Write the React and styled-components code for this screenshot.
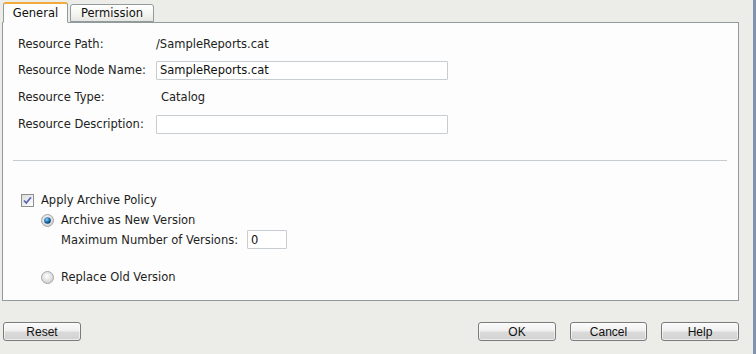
import React from "react";
import styled, { createGlobalStyle } from "styled-components";

const Global = createGlobalStyle`
  html, body { margin: 0; padding: 0; background: #ecece9; }
  body { font-family: "DejaVu Sans", sans-serif; font-size: 11px; color: #1e1e1e; }
  * { box-sizing: border-box; }
`;

const Frame = styled.div`
  width: 756px;
  height: 354px;
  background: #ecece9;
  border-right: 3px solid #8192b0;
  display: flex;
  flex-direction: column;
  font-family: "DejaVu Sans", "Liberation Sans", sans-serif;
  font-size: 11.5px;
`;

const TabStrip = styled.div`
  display: flex;
  align-items: flex-end;
  height: 23px;
  padding-left: 3px;
  gap: 2px;
  margin-bottom: -1px;
  position: relative;
  z-index: 1;
`;

const Tab = styled.div`
  height: ${(p) => (p.$active ? "21px" : "18px")};
  width: ${(p) => p.$w}px;
  display: flex;
  align-items: center;
  justify-content: center;
  border: 1px solid #919b9c;
  border-bottom: ${(p) => (p.$active ? "1px solid #fcfdfc" : "1px solid #919b9c")};
  border-top: ${(p) => (p.$active ? "2px solid #f3a93b" : "1px solid #919b9c")};
  border-radius: 3px 3px 0 0;
  background: ${(p) =>
    p.$active ? "#fcfdfc" : "linear-gradient(#ffffff, #f3f3f0 60%, #e6e6e2)"};
  color: #111;
  margin-bottom: ${(p) => (p.$active ? "0" : "1px")};
`;

const Panel = styled.div`
  margin: 0 14px 0 2px;
  height: 279px;
  border: 1px solid #919b9c;
  background: #fcfdfc;
  display: flex;
  flex-direction: column;
`;

const FormGrid = styled.div`
  display: grid;
  grid-template-columns: 138px 292px;
  grid-template-rows: 26px 26px 28px 26px;
  align-items: center;
  padding: 8px 0 0 15px;
`;

const Label = styled.div`
  color: #222;
  white-space: nowrap;
`;

const Value = styled.div`
  color: #222;
  padding-left: ${(p) => p.$indent || 0}px;
`;

const TextBox = styled.div`
  height: 19px;
  width: ${(p) => p.$w || 292}px;
  border: 1px solid #c8cdd1;
  border-radius: 1px;
  background: #fff;
  display: flex;
  align-items: center;
  padding-left: 3px;
  color: #111;
`;

const Separator = styled.div`
  margin: 23px 11px 0 10px;
  border-top: 1px solid #c6cbcf;
`;

const Policy = styled.div`
  display: flex;
  flex-direction: column;
  padding: 32px 0 0 18px;
`;

const CheckRow = styled.div`
  display: flex;
  align-items: center;
  gap: 7px;
  height: 14px;
  margin-left: ${(p) => p.$indent || 0}px;
  margin-top: ${(p) => p.$mt || 0}px;
`;

const SubRow = styled.div`
  display: flex;
  align-items: center;
  gap: 9px;
  margin: 3px 0 0 40px;
  height: 19px;
`;

const Footer = styled.div`
  display: flex;
  align-items: center;
  padding: 21px 14px 0 3px;
  gap: 14px;
`;

const Spacer = styled.div`
  flex: 1;
`;

const Button = styled.div`
  width: ${(p) => p.$w || 78}px;
  height: 19px;
  border: 1px solid #7b7b7b;
  border-radius: 3px;
  background: linear-gradient(#fbfbfb, #f0f0f0 45%, #dadada 55%, #d2d2d2);
  box-shadow: inset 0 0 0 1px rgba(255,255,255,0.6);
  display: flex;
  align-items: center;
  justify-content: center;
  color: #111;
  font-family: "Liberation Sans", Arial, sans-serif;
  font-size: 12px;
`;

const Checkbox = () => (
  <svg width="13" height="13" viewBox="0 0 13 13">
    <defs>
      <linearGradient id="cbg" x1="0" y1="0" x2="1" y2="1">
        <stop offset="0" stopColor="#dcdcdc" />
        <stop offset="1" stopColor="#ffffff" />
      </linearGradient>
    </defs>
    <rect x="0.5" y="0.5" width="12" height="12" fill="url(#cbg)" stroke="#8e8f8f" />
    <path d="M3 6.5 L5.3 9 L10 3.2" fill="none" stroke="#5a63b8" strokeWidth="1.7" />
  </svg>
);

const Radio = ({ on }) => (
  <svg width="13" height="13" viewBox="0 0 13 13">
    <defs>
      <radialGradient id="rOff" cx="0.45" cy="0.4" r="0.6">
        <stop offset="0" stopColor="#ffffff" />
        <stop offset="1" stopColor="#cfcfcf" />
      </radialGradient>
      <radialGradient id="rOn" cx="0.4" cy="0.35" r="0.6">
        <stop offset="0" stopColor="#8fd3f4" />
        <stop offset="0.6" stopColor="#1f7ab8" />
        <stop offset="1" stopColor="#0c3f6e" />
      </radialGradient>
    </defs>
    <circle cx="6.5" cy="6.5" r="6" fill="url(#rOff)" stroke="#a6a6a6" />
    {on && <circle cx="6.5" cy="6.5" r="3.3" fill="url(#rOn)" />}
  </svg>
);

export default function App() {
  return (
    <>
      <Global />
      <Frame>
        <TabStrip>
          <Tab $active $w={65}>General</Tab>
          <Tab $w={84}>Permission</Tab>
        </TabStrip>
        <Panel>
          <FormGrid>
            <Label>Resource Path:</Label>
            <Value>/SampleReports.cat</Value>
            <Label>Resource Node Name:</Label>
            <TextBox>SampleReports.cat</TextBox>
            <Label>Resource Type:</Label>
            <Value $indent={5}>Catalog</Value>
            <Label>Resource Description:</Label>
            <TextBox />
          </FormGrid>
          <Separator />
          <Policy>
            <CheckRow>
              <Checkbox />
              <span>Apply Archive Policy</span>
            </CheckRow>
            <CheckRow $indent={20} $mt={6}>
              <Radio on />
              <span>Archive as New Version</span>
            </CheckRow>
            <SubRow>
              <span>Maximum Number of Versions:</span>
              <TextBox $w={40}>0</TextBox>
            </SubRow>
            <CheckRow $indent={20} $mt={21}>
              <Radio />
              <span>Replace Old Version</span>
            </CheckRow>
          </Policy>
        </Panel>
        <Footer>
          <Button>Reset</Button>
          <Spacer />
          <Button>OK</Button>
          <Button $w={77}>Cancel</Button>
          <Button>Help</Button>
        </Footer>
      </Frame>
    </>
  );
}
